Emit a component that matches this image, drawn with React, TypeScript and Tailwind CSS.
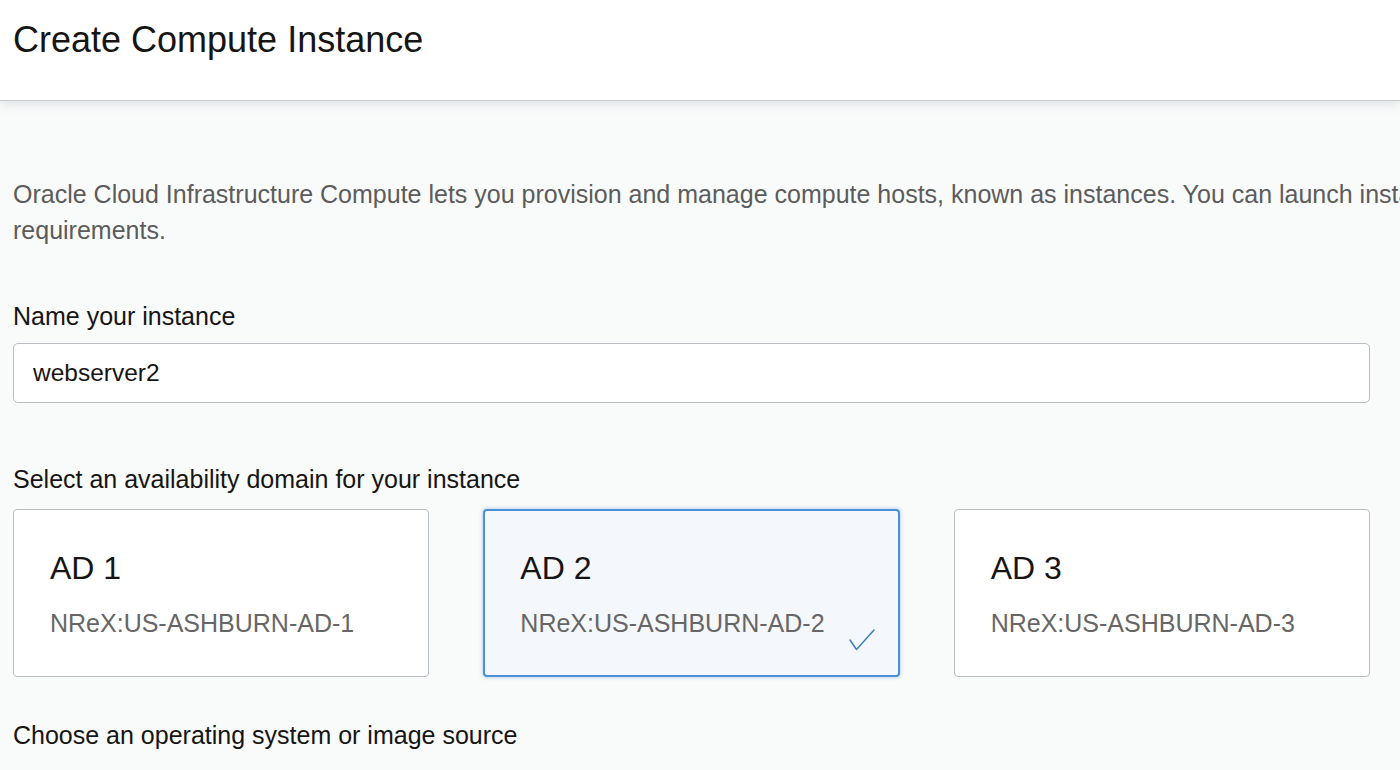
import { useState } from "react";

const domains = [
  { id: 1, name: "AD 1", ad: "NReX:US-ASHBURN-AD-1" },
  { id: 2, name: "AD 2", ad: "NReX:US-ASHBURN-AD-2" },
  { id: 3, name: "AD 3", ad: "NReX:US-ASHBURN-AD-3" },
];

export default function App() {
  const [name, setName] = useState("webserver2");
  const [selected, setSelected] = useState(2);

  return (
    <div className="w-[1400px] h-[770px] overflow-hidden bg-[#f9fafa] font-[family-name:'Liberation_Sans',Arial,sans-serif]">
      <header className="h-[101px] bg-white flex items-start pt-[20px] pl-[13px] border-b border-[#c9cdd1] shadow-[0_2px_10px_rgba(120,130,140,0.25)] relative z-10">
        <h1 className="text-[36px] leading-[40px] text-[#161513]">
          Create Compute Instance
        </h1>
      </header>

      <main className="pl-[13px] pt-[75px]">
        <p className="text-[25px] leading-[36px] text-[#5c5c5c] whitespace-nowrap">
          Oracle Cloud Infrastructure Compute lets you provision and manage compute hosts, known as instances. You can launch instances as needed to meet your compute and application
          <br />
          requirements.
        </p>

        <div className="w-[1357px]">
          <label className="block mt-[50px] text-[25px] leading-[36px] text-[#161513]">
            Name your instance
          </label>
          <input
            value={name}
            onChange={(e) => setName(e.target.value)}
            className="mt-[9px] w-full h-[60px] bg-white border border-[#b9bec3] rounded-[5px] px-[19px] text-[24.5px] text-[#161513] outline-none"
          />

          <div className="mt-[58px] text-[25px] leading-[36px] text-[#161513]">
            Select an availability domain for your instance
          </div>

          <div className="mt-[12px] grid grid-cols-3 gap-[54px]">
            {domains.map((d) => {
              const active = selected === d.id;
              return (
                <button
                  key={d.id}
                  onClick={() => setSelected(d.id)}
                  className={`relative h-[168px] flex flex-col items-start justify-start text-left pl-[36px] pt-[38px] rounded-[4px] ${
                    active
                      ? "bg-[#f4f7fb] border-2 border-[#4a8fd8] shadow-[0_0_4px_rgba(74,143,216,0.45)]"
                      : "bg-white border border-[#b9bec3]"
                  }`}
                >
                  <div className={`text-[32px] leading-[40px] text-[#161513] ${active ? "-mt-px -ml-px" : ""}`}>
                    {d.name}
                  </div>
                  <div className={`mt-[20px] text-[25px] leading-[30px] text-[#666666] ${active ? "-ml-px" : ""}`}>
                    {d.ad}
                  </div>
                  {active && (
                    <svg
                      className="absolute right-[22px] bottom-[23px]"
                      width="28"
                      height="24"
                      viewBox="0 0 28 24"
                      fill="none"
                    >
                      <path
                        d="M2 12 L8.5 21.5 L26 2"
                        stroke="#3f7fc4"
                        strokeWidth="1.5"
                        strokeLinecap="round"
                        strokeLinejoin="round"
                      />
                    </svg>
                  )}
                </button>
              );
            })}
          </div>

          <div className="mt-[40px] text-[25px] leading-[36px] text-[#161513]">
            Choose an operating system or image source
          </div>
        </div>
      </main>
    </div>
  );
}
